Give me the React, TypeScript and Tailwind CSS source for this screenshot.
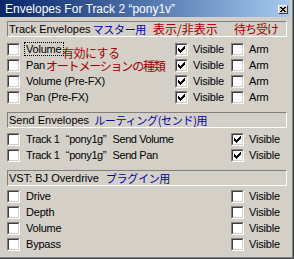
import React from "react";

const CheckMark = () => (
  <svg width="7" height="7" viewBox="0 0 7 7" shapeRendering="crispEdges" className="absolute left-[1px] top-[1px]">
    <g fill="#000">
      <rect x="6" y="0" width="1" height="1" />
      <rect x="5" y="1" width="2" height="1" />
      <rect x="0" y="2" width="1" height="1" />
      <rect x="4" y="2" width="3" height="1" />
      <rect x="0" y="3" width="2" height="1" />
      <rect x="3" y="3" width="3" height="1" />
      <rect x="0" y="4" width="5" height="1" />
      <rect x="1" y="5" width="3" height="1" />
      <rect x="2" y="6" width="1" height="1" />
    </g>
  </svg>
);

const Box = ({ checked = false }: { checked?: boolean }) => (
  <span className="inline-block w-[13px] h-[13px] shrink-0 border border-t-[#808080] border-l-[#808080] border-b-white border-r-white">
    <span className="relative block w-full h-full border border-t-[#404040] border-l-[#404040] border-b-[#d4d0c8] border-r-[#d4d0c8] bg-white">
      {checked && <CheckMark />}
    </span>
  </span>
);

const Header = ({ children, className = "" }: { children: React.ReactNode; className?: string }) => (
  <div
    className={`relative flex items-center h-[16px] w-[280px] border border-t-[#808080] border-l-[#808080] border-b-white border-r-white pl-[1px] whitespace-nowrap tracking-normal ${className}`}
  >
    {children}
  </div>
);

const Blue = ({ children, className = "" }: { children: React.ReactNode; className?: string }) => (
  <span className={`text-[#0000a8] text-[11px] leading-none font-['Noto_Sans_CJK_JP',sans-serif] tracking-[-0.3px] ${className}`}>
    {children}
  </span>
);

const OpenQ = () => <span className="inline-block w-[7px] text-right">“</span>;
const CloseQ = () => <span className="inline-block w-[7px] text-left">”</span>;

type RowProps = {
  label: React.ReactNode;
  visible?: boolean | null;
  arm?: boolean | null;
  focus?: boolean;
  className?: string;
  labelClass?: string;
  visibleInArm?: boolean;
};

const Row = ({
  label,
  visible = null,
  arm = null,
  focus = false,
  className = "",
  labelClass = "",
  visibleInArm = false,
}: RowProps) => (
  <div className={`grid grid-cols-[168px_56px_1fr] items-center h-[16px] ${className}`}>
    <div className="flex items-center">
      <Box />
      <span
        className={`ml-[4px] whitespace-nowrap leading-[12px] px-[1px] ${labelClass} ${
          focus ? "border border-dotted border-black" : "border border-transparent"
        }`}
      >
        {label}
      </span>
    </div>
    <div className="flex items-center">
      {visible !== null && !visibleInArm && (
        <>
          <Box checked={visible} />
          <span className="ml-[5px]">Visible</span>
        </>
      )}
    </div>
    <div className="flex items-center">
      {visibleInArm && visible !== null && (
        <>
          <Box checked={visible} />
          <span className="ml-[5px]">Visible</span>
        </>
      )}
      {arm !== null && (
        <>
          <Box checked={arm} />
          <span className="ml-[5px]">Arm</span>
        </>
      )}
    </div>
  </div>
);

export default function App() {
  return (
    <div className="w-[294px] h-[259px] bg-[#d4d0c8] border-r border-b border-[#404040] font-['Liberation_Sans',sans-serif] text-[11px] tracking-[-0.2px] text-black overflow-hidden">
      <div className="relative w-full h-full border-r border-b border-[#808080] pr-[2px]">
        {/* Title bar */}
        <div className="relative h-[17px] bg-gradient-to-r from-[#0a246a] to-[#a6caf0] flex items-center pl-[5px]">
          <span className="text-white text-[12px] leading-none tracking-normal whitespace-nowrap">
            Envelopes For Track 2 “pony1v”
          </span>
          <div className="absolute right-[2px] top-[5px] w-[10px] h-[9px] bg-[#d4d0c8] border border-t-white border-l-white border-b-[#404040] border-r-[#404040] flex items-center justify-center">
            <svg width="6" height="5" viewBox="0 0 6 5" shapeRendering="crispEdges">
              <g fill="#000">
                <rect x="0" y="0" width="2" height="1" />
                <rect x="4" y="0" width="2" height="1" />
                <rect x="1" y="1" width="4" height="1" />
                <rect x="2" y="2" width="2" height="1" />
                <rect x="1" y="3" width="4" height="1" />
                <rect x="0" y="4" width="2" height="1" />
                <rect x="4" y="4" width="2" height="1" />
              </g>
            </svg>
          </div>
        </div>

        <div className="pl-[7px] flex flex-col">
          <Header className="mt-[4px]">
            <span>Track Envelopes</span>
            <Blue className="ml-[2px]">マスター用</Blue>
            <span className="absolute left-[145px] top-[1px] text-[#a00000] text-[12px] leading-none font-['Noto_Sans_CJK_JP',sans-serif] tracking-[0px]">
              表示/非表示
            </span>
            <span className="absolute left-[226px] top-[1px] text-[#a00000] text-[12px] leading-none font-['Noto_Sans_CJK_JP',sans-serif] tracking-[-1px]">
              待ち受け
            </span>
          </Header>

          <div className="mt-[4px] relative">
            <Row label="Volume" visible={true} arm={false} focus />
            <Row label="Pan" visible={true} arm={false} />
            <Row label="Volume (Pre-FX)" visible={true} arm={false} />
            <Row label="Pan (Pre-FX)" visible={true} arm={false} />
            <span className="absolute left-[55px] top-[6px] text-[#a00000] text-[12px] leading-none font-['Noto_Sans_CJK_JP',sans-serif] tracking-[-0.5px]">
              有効にする
            </span>
            <span className="absolute left-[39px] top-[19px] text-[#a00000] text-[12px] leading-none font-['Noto_Sans_CJK_JP',sans-serif] tracking-[-1.2px]">
              オートメーションの種類
            </span>
          </div>

          <Header className="mt-[7px]">
            <span>Send Envelopes</span>
            <Blue className="ml-[5px]">ルーティング(センド)用</Blue>
          </Header>

          <div className="mt-[3px]">
            <Row
              label={
                <>
                  Track 1 <OpenQ />pony1g<CloseQ /> Send Volume
                </>
              }
              labelClass="tracking-[-0.4px]"
              visible={true}
              visibleInArm
            />
            <Row
              label={
                <>
                  Track 1 <OpenQ />pony1g<CloseQ /> Send Pan
                </>
              }
              labelClass="tracking-[-0.4px]"
              visible={true}
              visibleInArm
            />
          </div>

          <Header className="mt-[7px]">
            <span>VST: BJ Overdrive</span>
            <Blue className="ml-[7px]">プラグイン用</Blue>
          </Header>

          <div className="mt-[2px]">
            <Row label="Drive" visible={false} visibleInArm />
            <Row label="Depth" visible={false} visibleInArm />
            <Row label="Volume" visible={false} visibleInArm />
            <Row label="Bypass" visible={false} visibleInArm />
          </div>
        </div>
      </div>
    </div>
  );
}
